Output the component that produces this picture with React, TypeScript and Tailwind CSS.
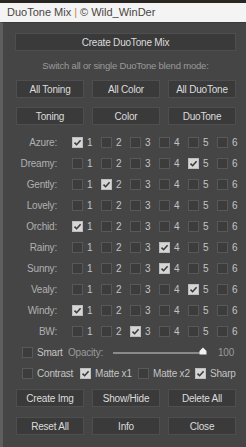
import React from "react";

const font = { fontFamily: '"Liberation Sans", Arial, sans-serif' };

const rows: { name: string; on: number }[] = [
  { name: "Azure:", on: 1 },
  { name: "Dreamy:", on: 5 },
  { name: "Gently:", on: 2 },
  { name: "Lovely:", on: 0 },
  { name: "Orchid:", on: 1 },
  { name: "Rainy:", on: 4 },
  { name: "Sunny:", on: 4 },
  { name: "Vealy:", on: 5 },
  { name: "Windy:", on: 1 },
  { name: "BW:", on: 3 },
];

function Box({ checked }: { checked?: boolean }) {
  if (checked) {
    return (
      <span className="flex w-[11px] h-[11px] shrink-0 items-center justify-center bg-[#d6d6d6] border border-[#bdbdbd]">
        <svg width="9" height="9" viewBox="0 0 9 9">
          <path d="M1.5 4.6 L3.6 6.7 L7.6 2.2" fill="none" stroke="#3a3a3a" strokeWidth="1.6" />
        </svg>
      </span>
    );
  }
  return <span className="block w-[11px] h-[11px] shrink-0 bg-[#3c3c3c] border border-[#585858]" />;
}

function Btn({ label, wide }: { label: string; wide?: boolean }) {
  return (
    <div
      className={
        "flex items-center justify-center h-[18px] bg-[#3a3a3a] border border-[#4e4e4e] text-[10px] tracking-[-0.2px] text-[#dcdcdc] " +
        (wide ? "w-full" : "w-[68px]")
      }
    >
      {label}
    </div>
  );
}

function BtnRow({ labels }: { labels: string[] }) {
  return (
    <div className="flex justify-between pl-px">
      {labels.map((l) => (
        <Btn key={l} label={l} />
      ))}
    </div>
  );
}

export default function App() {
  return (
    <div className="w-[246px] h-[447px] bg-[#242424] flex flex-col" style={font}>
      <div className="h-[3px] bg-[#2a2622]" />
      <div className="h-[19px] bg-[#f4f4f4] flex items-center pl-[7px] text-[11px] text-[#4a4540]">
        DuoTone Mix <span className="text-[#c98a3c] mx-[3px]">|</span> © Wild_WinDer
      </div>
      <div className="flex-1 bg-[#454545] border-l-[3px] border-[#5e5e5e] border-t border-t-[#3a3a3a] pl-[12px] pr-[10px] pt-[10px]">
        <Btn label="Create DuoTone Mix" wide />
        <div className="mt-[8px] h-[14px] text-center text-[9.5px] tracking-[-0.2px] text-[#9a9a9a] leading-[14px]">
          Switch all or single DuoTone blend mode:
        </div>
        <div className="mt-[7px] flex flex-col gap-[9px]">
          <BtnRow labels={["All Toning", "All Color", "All DuoTone"]} />
          <BtnRow labels={["Toning", "Color", "DuoTone"]} />
        </div>
        <div className="mt-[7px] flex flex-col">
          {rows.map((r) => (
            <div key={r.name} className="flex items-center h-[21px] text-[10px] tracking-[-0.2px]">
              <span className="w-[42px] shrink-0 whitespace-nowrap flex justify-end text-[#b0b0b0]">{r.name}</span>
              <div className="ml-[15px] flex">
                {[1, 2, 3, 4, 5, 6].map((n) => (
                  <div key={n} className="flex items-center gap-[4px] w-[29px]">
                    <Box checked={r.on === n} />
                    <span className="text-[#c4c4c4]">{n}</span>
                  </div>
                ))}
              </div>
            </div>
          ))}
          <div className="flex items-center h-[21px] text-[10px] tracking-[-0.2px] pl-[7px] whitespace-nowrap">
            <Box />
            <span className="ml-[4px] w-[31px] text-[#c4c4c4]">Smart</span>
            <span className="w-[45px] text-[#9a9a9a]">Opacity:</span>
            <div className="relative w-[90px] h-[2px] bg-[#8a8a8a]">
              <svg className="absolute right-[-4px] top-[-5px]" width="8" height="8" viewBox="0 0 8 8">
                <path d="M4 0.5 L7.5 4 L7.5 7.5 L0.5 7.5 L0.5 4 Z" fill="#f0f0f0" />
              </svg>
            </div>
            <span className="ml-[15px] text-[#9a9a9a]">100</span>
          </div>
          <div className="flex items-center h-[21px] text-[10px] tracking-[-0.2px] pl-[7px] text-[#c4c4c4] whitespace-nowrap">
            <Box />
            <span className="ml-[4px] w-[43px]">Contrast</span>
            <Box checked />
            <span className="ml-[4px] w-[43px]">Matte x1</span>
            <Box />
            <span className="ml-[4px] w-[42px]">Matte x2</span>
            <Box checked />
            <span className="ml-[4px]">Sharp</span>
          </div>
        </div>
        <div className="mt-[5px] flex flex-col gap-[10px]">
          <BtnRow labels={["Create Img", "Show/Hide", "Delete All"]} />
          <BtnRow labels={["Reset All", "Info", "Close"]} />
        </div>
      </div>
    </div>
  );
}
